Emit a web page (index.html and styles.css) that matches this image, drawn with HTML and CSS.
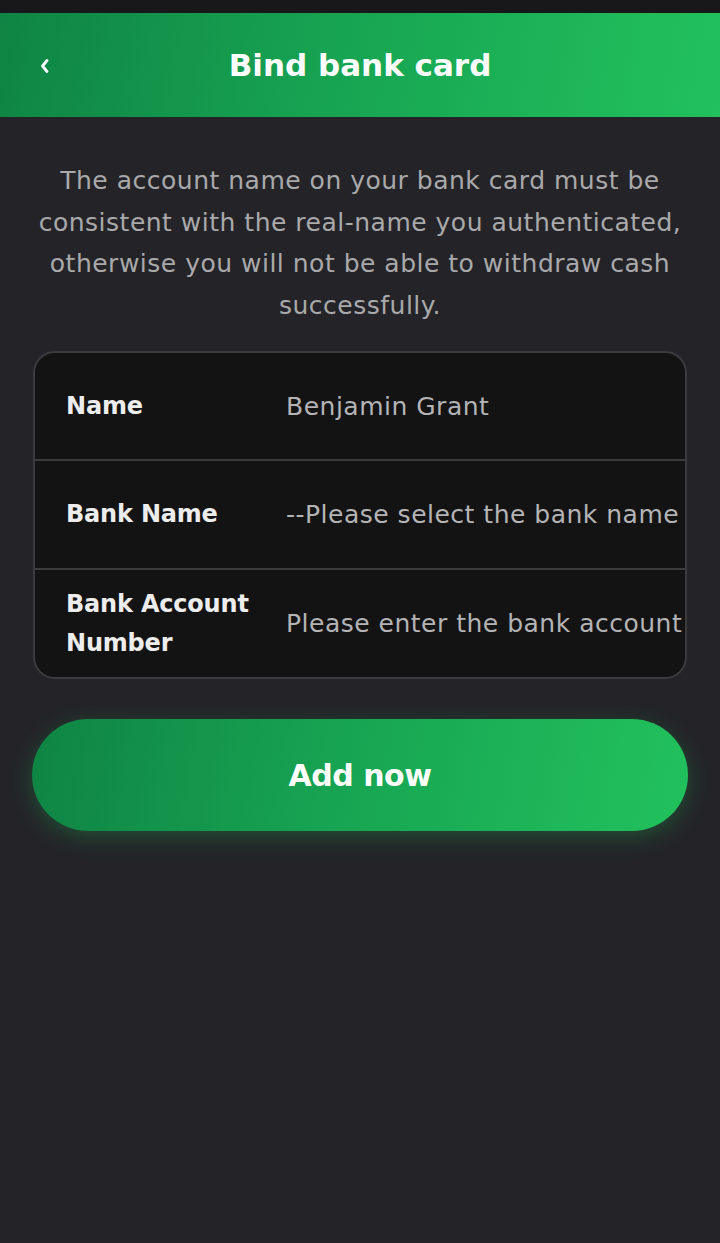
FILE: index.html
```html
<!DOCTYPE html>
<html lang="en">
<head>
<meta charset="utf-8">
<title>Bind bank card</title>
<link rel="stylesheet" href="styles.css">
</head>
<body>
<div class="statusbar"></div>
<header class="topbar">
  <svg class="back" width="10" height="14" viewBox="0 0 10 14" aria-hidden="true">
    <polyline points="7,1.5 2.5,7 7,12.5" fill="none" stroke="#fff" stroke-width="2.8" stroke-linecap="round" stroke-linejoin="round"/>
  </svg>
  <h1 class="title">Bind bank card</h1>
</header>
<main class="content">
  <p class="notice">The account name on your bank card must be consistent with the real-name you authenticated, otherwise you will not be able to withdraw cash successfully.</p>
  <div class="card">
    <div class="row">
      <div class="label">Name</div>
      <div class="value">Benjamin Grant</div>
    </div>
    <div class="row">
      <div class="label">Bank Name</div>
      <div class="value">--Please select the bank name</div>
    </div>
    <div class="row">
      <div class="label">Bank Account Number</div>
      <div class="value">Please enter the bank account</div>
    </div>
  </div>
  <button class="submit">Add now</button>
</main>
</body>
</html>
```

FILE: styles.css
```css
html, body {
  margin: 0;
  padding: 0;
  background: #242428;
  font-family: "DejaVu Sans", "Noto Sans", sans-serif;
}
body { min-height: 1243px; }
.statusbar {
  height: 13px;
  background: #18181a;
}
.topbar {
  height: 104px;
  background: linear-gradient(100deg, #0f8444 0%, #17a352 45%, #22c15d 100%);
  display: flex;
  align-items: center;
  justify-content: center;
  position: relative;
}
.back {
  position: absolute;
  left: 40px;
  top: 46px;
}
.title {
  margin: 0;
  color: #fff;
  font-size: 31px;
  font-weight: 700;
  letter-spacing: 0;
}
.content {
  padding: 0 32px;
}
.notice {
  margin: 0;
  padding: 43px 0 0;
  text-align: center;
  color: #a9a9ab;
  font-size: 25px;
  line-height: 41.5px;
  letter-spacing: 0.5px;
}
.card {
  margin: 25px 1px 0;
  background: #131314;
  border: 2px solid #3c3c3f;
  border-radius: 22px;
  overflow: hidden;
}
.row {
  display: flex;
  align-items: center;
  height: 107px;
  border-top: 2px solid #3c3c3f;
}
.row:first-child { border-top: none; height: 106px; }
.label {
  width: 220px;
  padding-left: 31px;
  flex: none;
  color: #ededed;
  font-size: 24px;
  font-weight: 700;
  line-height: 39px;
  letter-spacing: -0.2px;
}
.value {
  color: #b4b4b6;
  font-size: 25px;
  white-space: nowrap;
  overflow: hidden;
  letter-spacing: 0.5px;
}
.submit {
  display: block;
  width: 100%;
  height: 112px;
  margin-top: 40px;
  border: none;
  border-radius: 56px;
  background: linear-gradient(100deg, #0f8444 0%, #17a352 45%, #22c15d 100%);
  box-shadow: 0 6px 22px rgba(30, 190, 90, 0.28);
  color: #fff;
  font-family: inherit;
  font-size: 30px;
  font-weight: 700;
  letter-spacing: -0.5px;
}
```
